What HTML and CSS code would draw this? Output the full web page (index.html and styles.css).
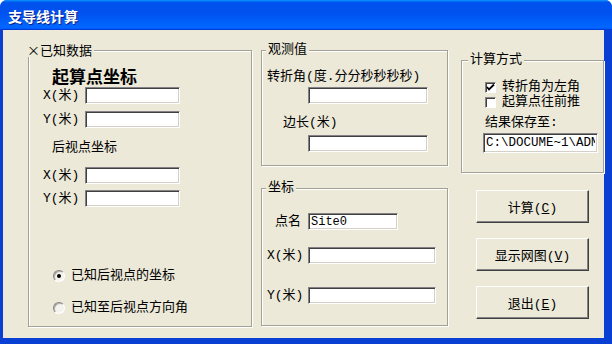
FILE: index.html
```html
<!DOCTYPE html>
<html lang="zh-cn">

<head>
    <meta charset="utf-8">
    <title>支导线计算</title>
    <link rel="stylesheet" href="styles.css">
</head>

<body>
    <div class="window">
        <div class="titlebar">支导线计算</div>
        <div class="client">

            <fieldset class="group known">
                <legend class="first">×已知数据</legend>
                <div class="heading">起算点坐标</div>
                <div class="row k-row gap4">
                    <span class="lbl">X(米)</span>
                    <input class="field w95" type="text">
                </div>
                <div class="row k-row gap7">
                    <span class="lbl">Y(米)</span>
                    <input class="field w95" type="text">
                </div>
                <div class="subheading">后视点坐标</div>
                <div class="row k-row gap12">
                    <span class="lbl">X(米)</span>
                    <input class="field w95" type="text">
                </div>
                <div class="row k-row gap6">
                    <span class="lbl">Y(米)</span>
                    <input class="field w95" type="text">
                </div>
                <div class="choice radio-first">
                    <span class="radio checked"></span>
                    <span>已知后视点的坐标</span>
                </div>
                <div class="choice radio-second">
                    <span class="radio"></span>
                    <span>已知至后视点方向角</span>
                </div>
            </fieldset>

            <div class="col-mid">
                <fieldset class="group obs">
                    <legend>观测值</legend>
                    <div class="text angle-lbl">转折角(度.分分秒秒秒秒)</div>
                    <input class="field w120 angle-in" type="text">
                    <div class="text side-lbl">边长(米)</div>
                    <input class="field w120 side-in" type="text">
                </fieldset>

                <fieldset class="group coord">
                    <legend>坐标</legend>
                    <div class="row c-row name-row">
                        <span class="lbl pad13">点名</span>
                        <input class="field w90" type="text" value="Site0">
                    </div>
                    <div class="row c-row x-row">
                        <span class="lbl">X(米)</span>
                        <input class="field w128" type="text">
                    </div>
                    <div class="row c-row y-row">
                        <span class="lbl">Y(米)</span>
                        <input class="field w128" type="text">
                    </div>
                </fieldset>
            </div>

            <div class="col-right">
                <fieldset class="group method">
                    <legend>计算方式</legend>
                    <div class="choice cb-first">
                        <span class="check">
                            <svg width="9" height="9" viewBox="0 0 9 9">
                                <path d="M1 4 L3 6.5 L8 1.5" fill="none" stroke="#000" stroke-width="1.8"/>
                            </svg>
                        </span>
                        <span>转折角为左角</span>
                    </div>
                    <div class="choice cb-second">
                        <span class="check"></span>
                        <span>起算点往前推</span>
                    </div>
                    <div class="text save-lbl">结果保存至:</div>
                    <input class="field save-in" type="text" value="C:\DOCUME~1\ADMINI~1\">
                </fieldset>

                <button class="btn first-btn">计算(<u>C</u>)</button>
                <button class="btn">显示网图(<u>V</u>)</button>
                <button class="btn">退出(<u>E</u>)</button>
            </div>

        </div>
    </div>
</body>

</html>
```

FILE: styles.css
```css
* {
    margin: 0;
    padding: 0;
    box-sizing: border-box;
}

body {
    width: 612px;
    height: 344px;
    overflow: hidden;
    font-family: "Liberation Mono", "Noto Sans CJK SC", monospace;
    font-size: 13px;
    color: #000;
}

.window {
    width: 612px;
    height: 344px;
    background: #0a3fd4;
    border-radius: 7px 7px 0 0;
    display: flex;
    flex-direction: column;
}

.titlebar {
    height: 30px;
    padding: 1px 0 0 8px;
    line-height: 30px;
    border-radius: 7px 7px 0 0;
    background: linear-gradient(180deg, #0997ff, #0053ee 8%, #0050ee 40%, #0066ff 88%, #0066ff 93%, #005bff 95%, #003dd7 96%, #003dd7);
    color: #fff;
    font-family: "Noto Sans CJK SC", sans-serif;
    font-size: 14px;
    font-weight: bold;
    text-shadow: 1px 1px #0a1e80;
}

.client {
    flex: 1;
    margin: 0 8px 6px 3px;
    background: #ece9d8;
    display: flex;
    align-items: flex-start;
    padding: 13px 0 0 25px;
}

/* group boxes */
.group {
    border: 1px solid #a3a196;
    box-shadow: inset 1px 1px #fff, 1px 1px #fff;
    min-width: 0;
}

.group legend {
    margin-left: 4px;
    padding: 0 2px;
    line-height: 14px;
    height: 14px;
    font-size: 13px;
    background: #ece9d8;
}

.group legend.first {
    margin-left: -2px;
    padding: 0 2px 0 0;
    font-family: "Noto Sans CJK SC", sans-serif;
}

.known {
    width: 224px;
    height: 284px;
}

.col-mid {
    width: 187px;
    margin-left: 9px;
}

.col-right {
    width: 143px;
    margin: 10px 0 0 13px;
}

.obs {
    height: 123px;
}

.coord {
    height: 145px;
    margin-top: 15px;
}

.method {
    height: 120px;
}

.method legend {
    margin-left: 6px;
}

/* text and rows */
.heading {
    margin: 11px 0 0 23px;
    font-family: "Noto Sans CJK SC", sans-serif;
    font-size: 17px;
    font-weight: bold;
    line-height: 15px;
    height: 15px;
}

.subheading {
    margin: 13px 0 0 23px;
    line-height: 14px;
    height: 14px;
}

.text {
    line-height: 14px;
    height: 14px;
}

.row {
    display: flex;
    align-items: center;
    height: 17px;
}

.lbl {
    line-height: 14px;
    white-space: nowrap;
}

.k-row .lbl {
    width: 56px;
    padding-left: 14px;
}

.gap4 {
    margin-top: 4px;
}

.gap6 {
    margin-top: 6px;
}

.gap7 {
    margin-top: 7px;
}

.gap12 {
    margin-top: 12px;
}

.c-row .lbl {
    width: 46px;
    padding-left: 5px;
}

.c-row .lbl.pad13 {
    padding-left: 13px;
}

.name-row {
    margin-top: 18px;
}

.x-row {
    margin-top: 17px;
}

.y-row {
    margin-top: 23px;
}

.angle-lbl {
    margin: 13px 0 0 5px;
}

.angle-in {
    margin: 3px 0 0 46px;
}

.side-lbl {
    margin: 12px 0 0 21px;
}

.side-in {
    margin: 5px 0 0 46px;
}

/* inputs */
.field {
    display: block;
    height: 17px;
    border: 1px solid;
    border-color: #848284 #fff #fff #848284;
    box-shadow: inset 1px 1px #404040, inset -1px -1px #d4d0c8;
    background: #fff;
    font-family: "Liberation Mono", monospace;
    font-size: 12px;
    padding: 0 2px;
    outline: none;
}

.w90 {
    width: 90px;
}

.w95 {
    width: 95px;
}

.w120 {
    width: 120px;
}

.w128 {
    width: 128px;
}

.save-in {
    width: 115px;
    height: 20px;
    margin: 3px 0 0 21px;
    font-size: 12.5px;
}

.save-lbl {
    margin: 7px 0 0 23px;
}

/* radios and checkboxes */
.choice {
    display: flex;
    align-items: center;
    height: 14px;
    line-height: 14px;
    white-space: nowrap;
}

.radio-first {
    margin: 62px 0 0 24px;
}

.radio-second {
    margin: 18px 0 0 24px;
}

.radio {
    width: 12px;
    height: 12px;
    margin-right: 6px;
    border-radius: 50%;
    border: 1px solid;
    border-color: #848284 #fff #fff #848284;
    background: #f4f3ee;
    box-shadow: inset 1px 1px #b0aea4;
    display: flex;
    align-items: center;
    justify-content: center;
}

.radio.checked::after {
    content: "";
    width: 4px;
    height: 4px;
    border-radius: 50%;
    background: #000;
}

.cb-first {
    margin: 13px 0 0 23px;
}

.cb-second {
    margin: 1px 0 0 23px;
}

.check {
    width: 11px;
    height: 11px;
    margin-right: 6px;
    border: 1px solid;
    border-color: #848284 #fff #fff #848284;
    box-shadow: inset 1px 1px #404040;
    background: #fff;
    display: flex;
    align-items: center;
    justify-content: center;
}

/* buttons */
.btn {
    display: block;
    width: 113px;
    height: 33px;
    margin: 15px 0 0 15px;
    background: #ece9d8;
    border: 1px solid;
    border-color: #fff #404040 #404040 #fff;
    box-shadow: inset -1px -1px #848284;
    font-family: "Liberation Mono", "Noto Sans CJK SC", monospace;
    font-size: 13px;
    color: #000;
}

.btn.first-btn {
    margin-top: 17px;
}
```
